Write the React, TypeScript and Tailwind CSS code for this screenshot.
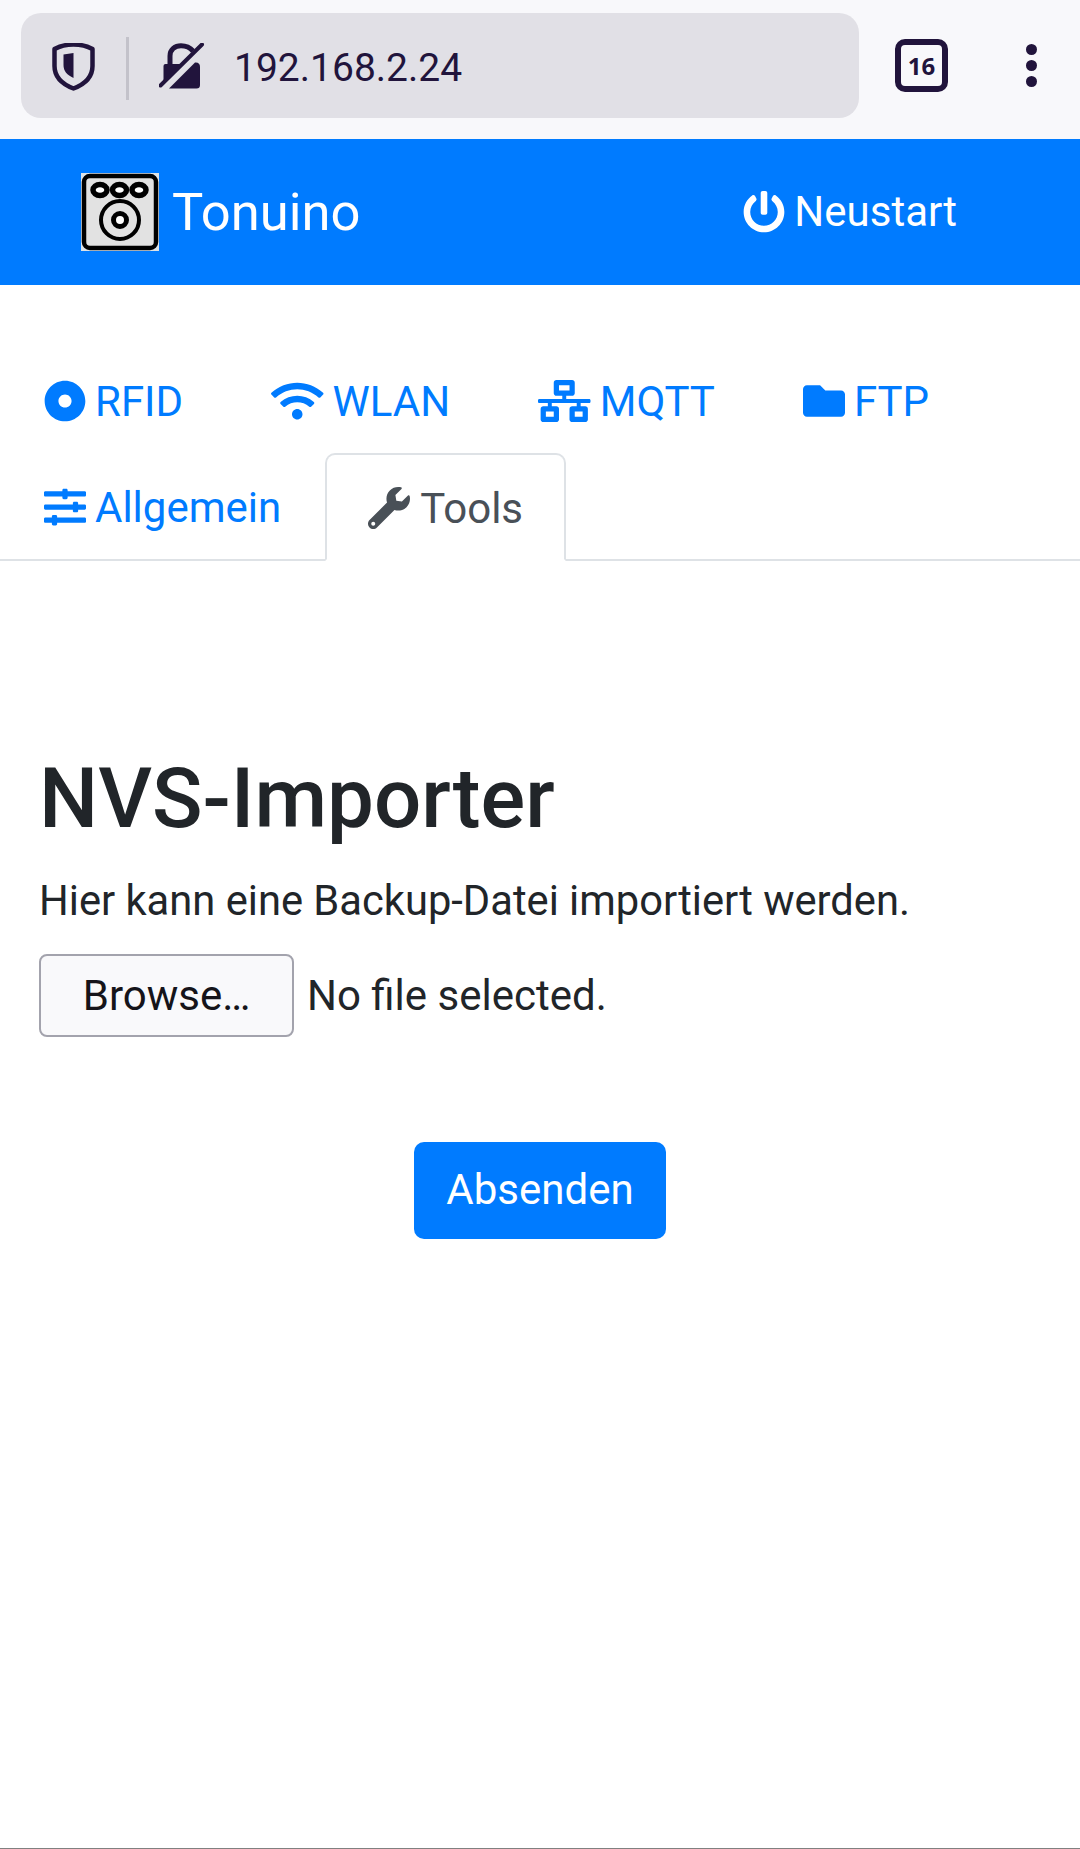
import { FaDotCircle, FaWifi, FaNetworkWired, FaFolder, FaSlidersH, FaWrench, FaPowerOff } from "react-icons/fa";

const tabs = [
  { label: "RFID", icon: <FaDotCircle className="w-[42px] h-[42px]" /> },
  { label: "WLAN", icon: <FaWifi className="w-[52.500px] h-[42px]" /> },
  { label: "MQTT", icon: <FaNetworkWired className="w-[52.500px] h-[42px]" /> },
  { label: "FTP", icon: <FaFolder className="w-[42px] h-[42px]" /> },
  { label: "Allgemein", icon: <FaSlidersH className="w-[42px] h-[42px]" /> },
];

function ShieldIcon() {
  return (
    <svg viewBox="0 0 44 50" className="w-[44px] h-[50px]">
      <path d="M22.500 1.500 C29 1.500 36 3 41.500 6 L41.500 23 C41.500 34 33 41.500 22.500 45.500 C12 41.500 3.500 34 3.500 23 L3.500 6 C9 3 16 1.500 22.500 1.500 Z" fill="none" stroke="#21143c" strokeWidth="4.500" strokeLinejoin="round" />
      <path d="M22.500 10 L22.500 35 C16 32 12.500 28 12.500 22 L12.500 11.500 Z" fill="#21143c" />
    </svg>
  );
}

function LockOffIcon() {
  return (
    <svg viewBox="0 0 46 50" className="w-[46px] h-[50px]">
      <path d="M11 22 L11 13 C11 6.500 16 2.800 22 2.800 C27 2.800 31 4.500 34 8" fill="none" stroke="#21143c" strokeWidth="5" />
      <path d="M6.500 21 L24 21 L4.500 41 L4.500 23 Q4.500 21 6.500 21 Z" fill="#21143c" />
      <path d="M10 45.500 L36 19.500 Q41 19 41 24 L41 42 Q41 45.500 37.500 45.500 Z" fill="#21143c" />
      <path d="M1.500 42.500 L43 1.500" stroke="#21143c" strokeWidth="4" strokeLinecap="round" />
    </svg>
  );
}

function Logo() {
  return (
    <svg viewBox="0 0 78 78" className="w-[78px] h-[78px]">
      <rect width="78" height="78" fill="#dfe3e6" />
      <rect x="3" y="3" width="72" height="72" rx="6" fill="#e2e2e2" stroke="#000" strokeWidth="4.500" />
      <ellipse cx="19" cy="17" rx="7" ry="5.500" fill="#fff" stroke="#000" strokeWidth="5.500" />
      <ellipse cx="38.500" cy="17" rx="7" ry="5.500" fill="#fff" stroke="#000" strokeWidth="5.500" />
      <ellipse cx="58" cy="17" rx="7" ry="5.500" fill="#fff" stroke="#000" strokeWidth="5.500" />
      <circle cx="39" cy="47" r="19" fill="none" stroke="#000" strokeWidth="4" />
      <circle cx="39" cy="47" r="6.500" fill="#fff" stroke="#000" strokeWidth="5" />
    </svg>
  );
}

export default function App() {
  return (
    <div className="w-[1080px] h-[1849px] bg-white border-b border-[#808080] overflow-hidden font-['Roboto',sans-serif]">
      <div className="h-[139px] bg-[#f8f8fb] flex items-center pl-[21px]">
        <div className="w-[838px] h-[105px] -mt-[8px] pt-[5px] rounded-[20px] bg-[#e1e0e6] flex items-center pl-[30px]">
          <ShieldIcon />
          <div className="w-[3px] h-[63px] bg-[#c3c2ca] ml-[31px] mr-[30px]" />
          <LockOffIcon />
          <span className="ml-[29px] text-[39px] text-[#21143c]">192.168.2.24</span>
        </div>
        <div className="ml-[36px] -mt-[8px] w-[53px] h-[53px] rounded-[10px] border-[6px] border-[#21143c] flex items-center justify-center text-[24px] font-bold text-[#21143c] font-['Open_Sans',sans-serif]">
          16
        </div>
        <div className="ml-[78px] -mt-[8px] flex flex-col gap-[5px]">
          <div className="w-[11px] h-[11px] rounded-full bg-[#21143c]" />
          <div className="w-[11px] h-[11px] rounded-full bg-[#21143c]" />
          <div className="w-[11px] h-[11px] rounded-full bg-[#21143c]" />
        </div>
      </div>

      <nav className="h-[146px] bg-[#007bff] flex items-center justify-between pl-[81px] pr-[123px]">
        <div className="flex items-center">
          <Logo />
          <span className="ml-[13px] text-[52.500px] text-white">Tonuino</span>
        </div>
        <a className="flex items-center text-[42px] text-white">
          <FaPowerOff className="w-[42px] h-[42px] mr-[9px]" />
          <span className="-mt-[2px]">Neustart</span>
        </a>
      </nav>

      <ul className="mt-[62px] flex flex-wrap border-b-[2px] border-[#dee2e6] text-[42px] text-[#007bff]">
        {tabs.map((t) => (
          <li key={t.label} className="h-[106px] pt-[2px] px-[44px] flex items-center">
            {t.icon}
            <span className="ml-[9px]">{t.label}</span>
          </li>
        ))}
        <li className="h-[108px] -mb-[2px] px-[41px] pt-[2px] flex items-center border-[2px] border-b-white border-[#dee2e6] rounded-t-[10px] bg-white text-[#495057]">
          <FaWrench className="w-[42px] h-[42px]" />
          <span className="ml-[10px]">Tools</span>
        </li>
      </ul>

      <div className="px-[39px] text-[#212529]">
        <h1 className="mt-[188px] text-[83.400px] leading-[100px] font-medium">NVS-Importer</h1>
        <p className="mt-[20px] text-[41.700px] leading-[63px]">Hier kann eine Backup-Datei importiert werden.</p>
        <div className="mt-[22px] flex items-center">
          <button className="w-[255px] h-[83px] rounded-[8px] border-[2px] border-[#a3a3ad] bg-[#f9f9fb] text-[42px] text-[#15141a]">
            Browse…
          </button>
          <span className="ml-[13px] text-[42px]">No file selected.</span>
        </div>
        <div className="mt-[105px] flex justify-center">
          <button className="w-[252px] h-[97px] pb-[2px] rounded-[10px] bg-[#007bff] text-[42px] text-white">Absenden</button>
        </div>
      </div>
    </div>
  );
}
